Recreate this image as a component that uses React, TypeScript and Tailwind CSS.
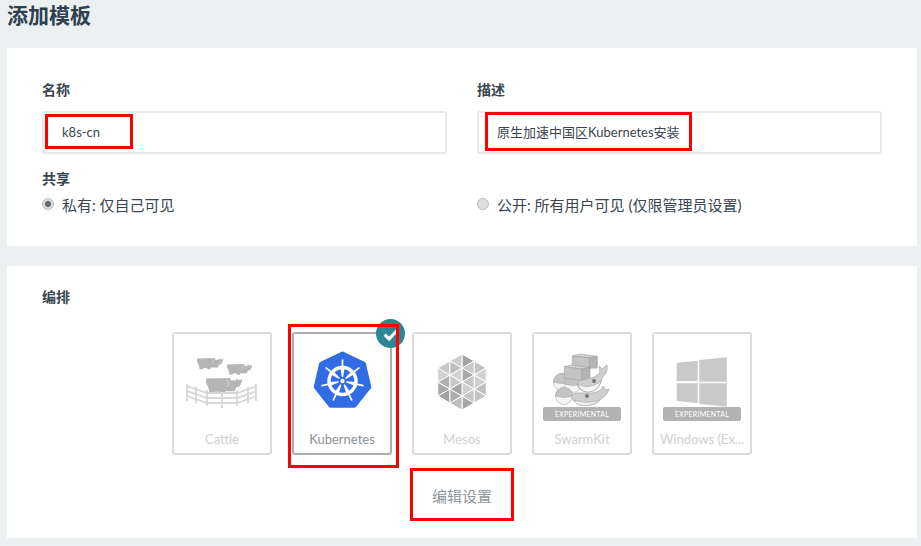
import React from "react";

const font = { fontFamily: '"Lato", "Noto Sans CJK SC", sans-serif' };

function Cow({ x, y, s }: { x: number; y: number; s: number }) {
  return (
    <g transform={`translate(${x} ${y}) scale(${s})`} fill="#b5b5b5">
      <path d="M0 0.5 L20 0 L21 2 L25 2 L25 0 L26 1.5 L29 1.5 L29.5 0 L30 3 L28 7 L25 8 L24 11 L20 11 L19 11 L16 11 L15.5 13 L12 13 L11.5 11.5 L7 11.5 L6.5 13 L3 13 L2 8 L0 4 Z" />
      <path d="M17 1 L19 4 L18 7" fill="none" stroke="#e2e2e2" strokeWidth={0.6} />
    </g>
  );
}

function CattleIcon() {
  const rails = [0, 5, 10];
  const posts = [13, 22, 33, 48, 63, 74, 82];
  return (
    <svg viewBox="0 0 96 96" className="w-full h-[96px]">
      <Cow x={23} y={24} s={0.87} />
      <Cow x={53} y={30} s={0.83} />
      <Cow x={32} y={44} s={1.2} />
      <g stroke="#d6d6d6" fill="none" strokeWidth={1.8}>
        {rails.map((r) => (
          <path key={r} d={`M13 ${52 + r} L33 ${59 + r} L63 ${59 + r} L83 ${52 + r}`} />
        ))}
        {posts.map((p, i) => (
          <line key={p} x1={p} x2={p} y1={i === 3 ? 59 : 50 + Math.min(i, 6 - i) * 3} y2={i === 3 ? 74 : 67 + Math.min(i, 6 - i) * 2.5} />
        ))}
      </g>
    </svg>
  );
}

function KubeIcon() {
  const cx = 48.5, cy = 47;
  const hept = Array.from({ length: 7 }, (_, i) => {
    const a = -Math.PI / 2 + (i * 2 * Math.PI) / 7;
    return `${cx + 27.5 * Math.cos(a)},${cy + 27.5 * Math.sin(a)}`;
  }).join(" ");
  const spokes = Array.from({ length: 7 }, (_, i) => (i * 360) / 7);
  return (
    <svg viewBox="0 0 96 96" className="w-full h-[96px]">
      <polygon points={hept} fill="#326ce5" stroke="#326ce5" strokeWidth={4} strokeLinejoin="round" />
      <circle cx={cx} cy={cy} r={13.5} fill="none" stroke="#fff" strokeWidth={3.4} />
      <circle cx={cx} cy={cy} r={2.2} fill="#fff" />
      {spokes.map((d) => (
        <g key={d} transform={`rotate(${d} ${cx} ${cy})`} fill="#fff">
          <path d={`M${cx - 0.7} ${cy - 4} L${cx + 0.7} ${cy - 4} L${cx + 2} ${cy - 13} L${cx - 2} ${cy - 13} Z`} />
          <line x1={cx} y1={cy - 14} x2={cx} y2={cy - 21} stroke="#fff" strokeWidth={1.7} strokeLinecap="round" />
        </g>
      ))}
    </svg>
  );
}

function MesosIcon() {
  const cx = 48, cy = 48, R = 28;
  const pt = (i: number, r: number) => {
    const a = -Math.PI / 2 + (i * Math.PI) / 3;
    return [cx + r * Math.cos(a), cy + r * Math.sin(a)];
  };
  const shades = [
    ["#a3a3a3", "#c4c4c4", "#c9c9c9", "#a8a8a8"],
    ["#d2d2d2", "#c0c0c0", "#d0d0d0", "#c4c4c4"],
    ["#c4c4c4", "#a6a6a6", "#c6c6c6", "#d0d0d0"],
    ["#bdbdbd", "#9f9f9f", "#adadad", "#a4a4a4"],
    ["#a8a8a8", "#d0d0d0", "#b0b0b0", "#c9c9c9"],
    ["#c8c8c8", "#cfcfcf", "#bcbcbc", "#d4d4d4"],
  ];
  const tris: { p: number[][]; c: string }[] = [];
  for (let i = 0; i < 6; i++) {
    const a = pt(i, R), b = pt(i + 1, R), o = [cx, cy];
    const mid = (u: number[], v: number[]) => [(u[0] + v[0]) / 2, (u[1] + v[1]) / 2];
    const ab = mid(a, b), ao = mid(a, o), bo = mid(b, o);
    [[a, ab, ao], [ab, b, bo], [ao, bo, ab], [ao, bo, o]].forEach((p, j) => tris.push({ p, c: shades[i][j] }));
  }
  return (
    <svg viewBox="0 0 96 96" className="w-full h-[96px]">
      {tris.map((t, i) => (
        <polygon key={i} points={t.p.map((q) => q.join(",")).join(" ")} fill={t.c} stroke="#fff" strokeWidth={1} />
      ))}
    </svg>
  );
}

function Lobe({ cx, cy, r }: { cx: number; cy: number; r: number }) {
  return (
    <g stroke="#a8a8a8" strokeWidth={0.6}>
      <circle cx={cx} cy={cy} r={r} fill="#f4f4f4" />
      <path d={`M${cx - r} ${cy} A${r} ${r} 0 0 1 ${cx + r} ${cy} Q${cx} ${cy + 3} ${cx - r} ${cy} Z`} fill="#c4c4c4" />
    </g>
  );
}

function SwarmIcon() {
  return (
    <svg viewBox="0 0 96 73" className="w-full h-[73px]">
      <Lobe cx={28} cy={48} r={8.5} />
      <Lobe cx={39} cy={50} r={8.5} />
      <g stroke="#a0a0a0" strokeWidth={0.6}>
        <path d="M44 47 C50 45 60 46 66 38 L65 32 L68 35 L73 31 C74 37 71 41 68 44 C67 52 61 58 54 58 C47 58 42 53 44 47 Z" fill="#cfcfcf" />
        <path d="M44 50 C50 54 60 53 67 47 C65 54 60 58 54 58 C49 58 45 55 44 50 Z" fill="#f4f4f4" />
      </g>
      <circle cx={60} cy={47} r={2} fill="#777" />
      <g stroke="#a0a0a0" strokeWidth={0.6}>
        <path d="M38.3 22 L46 20 L63.3 22.3 L55.3 23.7 Z" fill="#d4d4d4" />
        <path d="M38.3 22 L55.3 23.7 L55.3 34.3 L38.3 31.7 Z" fill="#c4c4c4" />
        <path d="M55.3 23.7 L63.3 22.3 L63.3 34 L55.3 34.3 Z" fill="#b4b4b4" />
        <path d="M30.3 32.7 L38 31 L56 33.7 L47.7 35 Z" fill="#d4d4d4" />
        <path d="M30.3 32.7 L47.7 35 L47.7 46 L30.3 44 Z" fill="#c4c4c4" />
        <path d="M47.7 35 L56 33.7 L56 44 L47.7 46 Z" fill="#b4b4b4" />
      </g>
      <Lobe cx={30} cy={62} r={8.5} />
      <g stroke="#a0a0a0" strokeWidth={0.6}>
        <path d="M38 61 C44 57 52 60 58 59 C64 58 68 56 69 52 L72 56 L75 55 C74 60 70 63 67 65 C62 72 46 74 41 68 C39 66 37 64 38 61 Z" fill="#cfcfcf" />
        <path d="M40 66 C48 69 58 69 66 66 C61 72 46 74 41 68 Z" fill="#f4f4f4" />
      </g>
      <circle cx={53} cy={62} r={2} fill="#777" />
    </svg>
  );
}

function WindowsIcon() {
  return (
    <svg viewBox="0 0 96 73" className="w-full h-[73px]">
      <g fill="#c9c9c9">
        <path d="M22.7 28.7 L43.7 26.7 L43.7 47 L22.7 47 Z" />
        <path d="M45.3 26 L72.7 23.3 L72.7 47.7 L45.3 47.7 Z" />
        <path d="M22.7 49.3 L43.7 49.3 L43.7 69 L22.7 67 Z" />
        <path d="M45.3 49.3 L72.7 49.3 L72.7 72.7 L45.3 70 Z" />
      </g>
    </svg>
  );
}

function Badge() {
  return (
    <div className="mx-auto w-[78px] h-[14px] bg-[#b3b3b3] rounded-[2px] text-white text-[7px] leading-[14px] text-center tracking-[0.25px]">
      EXPERIMENTAL
    </div>
  );
}

function Tile({ label, active, children }: { label: string; active?: boolean; children: React.ReactNode }) {
  return (
    <div
      className={`relative w-[100px] h-[123px] rounded-[3px] border-2 flex flex-col ${
        active ? "border-[#a9aeb1]" : "border-[#dcdcdc]"
      }`}
    >
      {children}
      <div
        className={`absolute left-0 right-0 bottom-[4px] text-center text-[13px] leading-[20px] whitespace-nowrap ${
          active ? "text-[#8b9298]" : "text-[#d0d0d0]"
        }`}
      >
        {label}
      </div>
      {active && (
        <div className="absolute right-[-15px] top-[-15px] w-[29px] h-[29px] rounded-full bg-[#2e8693] flex items-center justify-center">
          <svg viewBox="0 0 16 16" className="w-[20px] h-[20px]">
            <path d="M3 8.5 L6.5 12 L13 5" fill="none" stroke="#fff" strokeWidth={2.6} />
          </svg>
        </div>
      )}
    </div>
  );
}

function RedBox({ className }: { className: string }) {
  return <div className={`absolute z-10 border-[3px] border-[#ff0000] pointer-events-none ${className}`} />;
}

function Radio({ checked }: { checked?: boolean }) {
  return (
    <span className="mb-[3px] w-[12px] h-[12px] rounded-full bg-[#dedede] border border-[#bcbcbc] flex items-center justify-center shrink-0">
      {checked && <span className="w-[6px] h-[6px] rounded-full bg-[#666]" />}
    </span>
  );
}

export default function App() {
  return (
    <div style={font} className="relative w-[921px] h-[546px] overflow-hidden bg-[#ecf0f1] text-[#3a4650]">
      <div className="px-[7px] h-[48px]">
        <h1 className="text-[21px] leading-[30px] font-bold text-[#2f4050]">添加模板</h1>
      </div>

      <section className="ml-[7px] w-[910px] h-[198px] bg-white pt-[32px] px-[35px]">
        <div className="flex gap-[30px]">
          <div className="w-[405px]">
            <div className="text-[14px] leading-[20px] font-bold">名称</div>
            <div className="mt-[11px] h-[43px] border-2 border-[#e6eaeb] rounded-[2px] flex items-center pl-[18px] text-[13px]">
              k8s-cn
            </div>
          </div>
          <div className="w-[405px]">
            <div className="text-[14px] leading-[20px] font-bold">描述</div>
            <div className="mt-[11px] h-[43px] border-2 border-[#e6eaeb] rounded-[2px] flex items-center pl-[18px] text-[13px]">
              原生加速中国区Kubernetes安装
            </div>
          </div>
        </div>
        <div className="mt-[15px] text-[14px] leading-[20px] font-bold">共享</div>
        <div className="mt-[6px] flex gap-[30px] text-[15px] leading-[20px]">
          <div className="w-[405px] flex items-center gap-[8px]">
            <Radio checked />
            私有: 仅自己可见
          </div>
          <div className="w-[405px] flex items-center gap-[8px]">
            <Radio />
            公开: 所有用户可见 (仅限管理员设置)
          </div>
        </div>
      </section>

      <section className="ml-[7px] mt-[20px] w-[910px] h-[272px] bg-white pt-[21px] px-[35px]">
        <div className="text-[14px] leading-[20px] font-bold">编排</div>
        <div className="mt-[25px] flex justify-center gap-[20px]">
          <Tile label="Cattle"><CattleIcon /></Tile>
          <Tile label="Kubernetes" active><KubeIcon /></Tile>
          <Tile label="Mesos"><MesosIcon /></Tile>
          <Tile label="SwarmKit"><SwarmIcon /><Badge /></Tile>
          <Tile label="Windows (Ex..."><WindowsIcon /><Badge /></Tile>
        </div>
        <div className="mt-[31px] text-center text-[15px] leading-[20px] text-[#8f969c]">编辑设置</div>
      </section>

      <RedBox className="left-[45px] top-[114px] w-[88px] h-[35px]" />
      <RedBox className="left-[485px] top-[112px] w-[207px] h-[39px]" />
      <RedBox className="left-[288px] top-[324px] w-[111px] h-[144px]" />
      <RedBox className="left-[410px] top-[468px] w-[104px] h-[53px]" />
    </div>
  );
}
